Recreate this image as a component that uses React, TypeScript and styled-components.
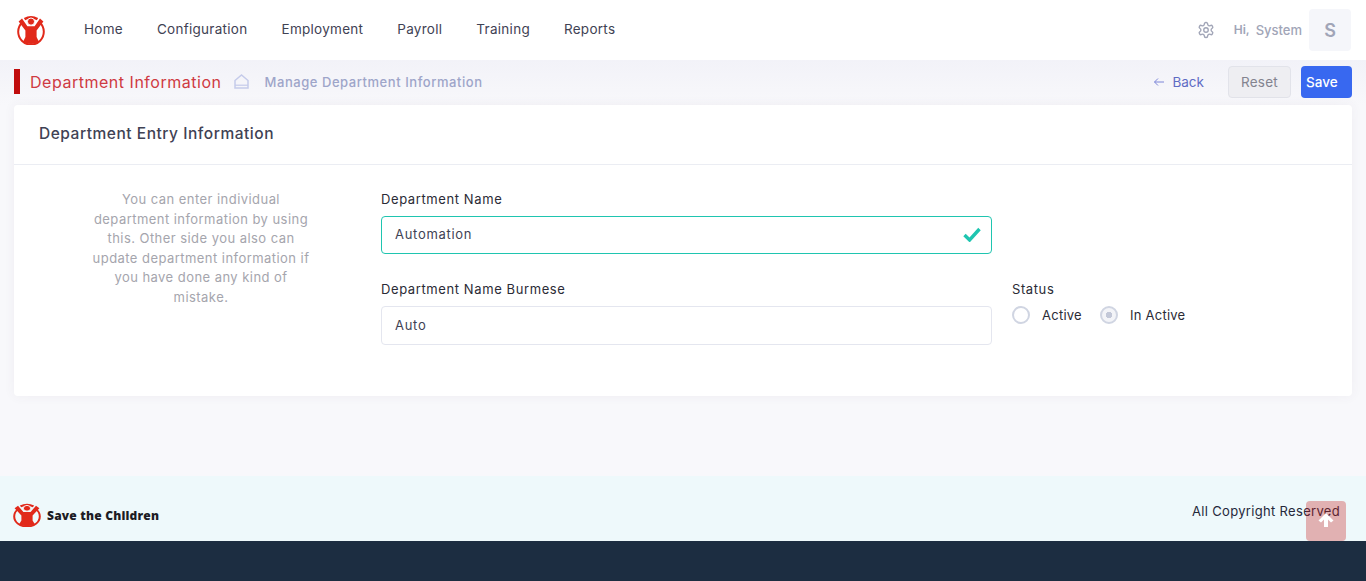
import styled, {createGlobalStyle} from 'styled-components'

const GlobalStyle = createGlobalStyle`
  html, body {
    margin: 0;
    padding: 0;
    height: 100%;
    overflow: hidden;
    background: #f8f8fb;
    font-family: Inter, 'Noto Sans', sans-serif;
  }
  * { box-sizing: border-box; }
`

const NAV_ITEMS = ['Home', 'Configuration', 'Employment', 'Payroll', 'Training', 'Reports']

const Logo = ({width, height}: {width: number; height: number}) => (
  <svg width={width} height={height} viewBox="0 0 30 30" fill="none" preserveAspectRatio="none">
    <path d="M6.2 7.5 A12.8 12.8 0 1 0 23.8 7.5" stroke="#e1291a" strokeWidth="2" />
    <path d="M8.5 4.2 A12.8 12.8 0 0 1 21.5 4.2" stroke="#e1291a" strokeWidth="2.6" />
    <circle cx="15" cy="6.6" r="3.6" fill="#e1291a" stroke="#fff" strokeWidth="1" />
    <path
      d="M2.6 6.6 L6 3.4 L11.4 11.2 L18.6 11.2 L24 3.4 L27.4 6.6 L20.6 15.5 L20.6 22 L23 27 Q15 31 7 27 L9.4 22 L9.4 15.5 Z"
      fill="#e1291a"
    />
  </svg>
)

const App = () => {
  return (
    <>
      <GlobalStyle />
      <Page>
        <TopBar>
          <LogoSlot>
            <Logo width={30} height={30} />
          </LogoSlot>
          <Nav>
            {NAV_ITEMS.map(item => (
              <NavLink key={item}>{item}</NavLink>
            ))}
          </Nav>
          <UserArea>
            <svg width="18" height="18" viewBox="0 0 24 24" fill="none" stroke="#a1a5b7" strokeWidth="1.8" strokeLinecap="round" strokeLinejoin="round">
              <path d="M12.22 2h-.44a2 2 0 0 0-2 2v.18a2 2 0 0 1-1 1.73l-.43.25a2 2 0 0 1-2 0l-.15-.08a2 2 0 0 0-2.73.73l-.22.38a2 2 0 0 0 .73 2.73l.15.1a2 2 0 0 1 1 1.72v.51a2 2 0 0 1-1 1.74l-.15.09a2 2 0 0 0-.73 2.73l.22.38a2 2 0 0 0 2.73.73l.15-.08a2 2 0 0 1 2 0l.43.25a2 2 0 0 1 1 1.73V20a2 2 0 0 0 2 2h.44a2 2 0 0 0 2-2v-.18a2 2 0 0 1 1-1.73l.43-.25a2 2 0 0 1 2 0l.15.08a2 2 0 0 0 2.73-.73l.22-.39a2 2 0 0 0-.73-2.73l-.15-.08a2 2 0 0 1-1-1.74v-.5a2 2 0 0 1 1-1.74l.15-.09a2 2 0 0 0 .73-2.73l-.22-.38a2 2 0 0 0-2.73-.73l-.15.08a2 2 0 0 1-2 0l-.43-.25a2 2 0 0 1-1-1.73V4a2 2 0 0 0-2-2z" />
              <circle cx="12" cy="12" r="3" />
            </svg>
            <Greeting>
              <span>Hi,</span>
              <strong>System</strong>
            </Greeting>
            <Avatar>S</Avatar>
          </UserArea>
        </TopBar>

        <SubHeader>
          <PageMark />
          <PageTitle>Department Information</PageTitle>
          <svg width="15" height="15" viewBox="0 0 15 15" fill="none" stroke="#c5cbea" strokeWidth="1.5">
            <path d="M1 6.5 L7.5 1 L14 6.5 V14 H1 Z" />
            <path d="M1 11.2 H14" strokeWidth="1.2" />
          </svg>
          <Crumb>Manage Department Information</Crumb>
          <Actions>
            <BackLink>
              <svg width="12" height="12" viewBox="0 0 12 12" fill="none" stroke="#7c86d8" strokeWidth="1">
                <path d="M11 6 H1.5 M5 2.5 L1.5 6 L5 9.5" />
              </svg>
              Back
            </BackLink>
            <ResetButton>Reset</ResetButton>
            <SaveButton>Save</SaveButton>
          </Actions>
        </SubHeader>

        <Card>
          <CardHead>Department Entry Information</CardHead>
          <CardBody>
            <HelpText>
              You can enter individual department information by using this. Other side you also can update department
              information if you have done any kind of mistake.
            </HelpText>
            <FormGrid>
              <Field>
                <FieldLabel>Department Name</FieldLabel>
                <InputWrap>
                  <TextInput $valid readOnly value="Automation" />
                  <CheckMark width="18" height="15" viewBox="0 0 18 15" fill="none" stroke="#1fc5b0" strokeWidth="3.4">
                    <path d="M1.5 8 L6.6 13 L16.5 2" />
                  </CheckMark>
                </InputWrap>
              </Field>
              <div />
              <Field>
                <FieldLabel>Department Name Burmese</FieldLabel>
                <TextInput readOnly value="Auto" />
              </Field>
              <Field>
                <FieldLabel>Status</FieldLabel>
                <RadioRow>
                  <RadioOption>
                    <RadioDot />
                    Active
                  </RadioOption>
                  <RadioOption>
                    <RadioDot $checked />
                    In Active
                  </RadioOption>
                </RadioRow>
              </Field>
            </FormGrid>
          </CardBody>
        </Card>

        <Spacer />

        <Footer>
          <FooterBrand>
            <Logo width={30} height={24} />
            <BrandName>Save the Children</BrandName>
          </FooterBrand>
          <Copyright>All Copyright Reserved</Copyright>
        </Footer>
        <BottomBand />
        <ScrollTop>
          <svg width="16" height="16" viewBox="0 0 16 16" fill="#fff">
            <path d="M8 1 L15.5 8.5 L13 10.5 L10 7.5 V15 H6 V7.5 L3 10.5 L0.5 8.5 Z" />
          </svg>
        </ScrollTop>
      </Page>
    </>
  )
}

export default App

const Page = styled.div`
  position: relative;
  height: 581px;
  display: flex;
  flex-direction: column;
  overflow: hidden;
`

const TopBar = styled.header`
  height: 60px;
  flex: none;
  background: #fff;
  display: flex;
  align-items: center;
  padding: 0 15px 0 16px;
`

const LogoSlot = styled.div`
  width: 68px;
  display: flex;
`

const Nav = styled.nav`
  display: flex;
  gap: 34px;
  padding-bottom: 2px;
`

const NavLink = styled.a`
  font-size: 13.5px;
  letter-spacing: 0.28px;
  color: #3f4254;
`

const UserArea = styled.div`
  margin-left: auto;
  display: flex;
  align-items: center;
`

const Greeting = styled.div`
  display: flex;
  gap: 6px;
  margin: 0 7px 0 19px;
  font-size: 13px;
  color: #a1a5b7;
  span { font-weight: 600; font-size: 12px; }
  strong { font-weight: 500; }
`

const Avatar = styled.div`
  width: 42px;
  height: 42px;
  border-radius: 4px;
  background: #f5f6fa;
  color: #a1a5b7;
  font-size: 18px;
  font-weight: 600;
  display: flex;
  align-items: center;
  justify-content: center;
`

const SubHeader = styled.div`
  height: 45px;
  flex: none;
  display: flex;
  align-items: center;
  padding: 0 14px 2px;
  background: linear-gradient(#f2f2f8, #f8f8fb);
`

const PageMark = styled.div`
  width: 6px;
  height: 25px;
  background: #c00d0d;
  margin-right: 10px;
`

const PageTitle = styled.h1`
  margin: 0 12px 0 0;
  font-size: 16px;
  font-weight: 400;
  letter-spacing: 0.52px;
  color: #cf3a42;
`

const Crumb = styled.span`
  margin-left: 16px;
  font-size: 13px;
  font-weight: 500;
  letter-spacing: 0.55px;
  color: #9ea5c9;
`

const Actions = styled.div`
  margin-left: auto;
  display: flex;
  align-items: center;
`

const BackLink = styled.a`
  display: flex;
  align-items: center;
  gap: 7px;
  font-size: 13.5px;
  color: #5f6bc4;
  margin-right: 24px;
`

const ResetButton = styled.button`
  width: 63px;
  height: 32px;
  border: 1px solid #e2e3ea;
  border-radius: 4px;
  background: #eeeef2;
  color: #83838f;
  font: 400 13.5px Inter, sans-serif;
  letter-spacing: 0.2px;
  margin-right: 10px;
`

const SaveButton = styled.button`
  width: 51px;
  height: 32px;
  padding: 0 0 0 5px;
  border: 0;
  border-radius: 4px;
  background: #3868f0;
  color: #fff;
  text-align: left;
  font: 500 13.5px Inter, sans-serif;
`

const Card = styled.section`
  flex: none;
  height: 291px;
  margin: 0 14px;
  background: #fff;
  border-radius: 4px;
  box-shadow: 0 0 12px rgba(82, 63, 105, 0.06);
`

const CardHead = styled.div`
  height: 60px;
  padding: 0 25px 2px;
  display: flex;
  align-items: center;
  border-bottom: 1px solid #ebedf3;
  font-size: 15.5px;
  font-weight: 500;
  letter-spacing: 0.53px;
  color: #3f4254;
`

const CardBody = styled.div`
  display: flex;
  padding-top: 25px;
`

const HelpText = styled.p`
  width: 224px;
  margin: 0 0 0 75px;
  text-align: center;
  font-size: 13px;
  line-height: 19.6px;
  letter-spacing: 0.45px;
  color: #a5a5ad;
`

const FormGrid = styled.div`
  margin-left: 68px;
  display: grid;
  grid-template-columns: 611px 240px;
  column-gap: 20px;
  row-gap: 26px;
`

const Field = styled.div`
  display: flex;
  flex-direction: column;
  gap: 8px;
`

const FieldLabel = styled.label`
  font-size: 13px;
  line-height: 18px;
  letter-spacing: 0.6px;
  color: #2b2b36;
`

const InputWrap = styled.div`
  position: relative;
`

const TextInput = styled.input<{$valid?: boolean}>`
  width: 100%;
  height: ${p => (p.$valid ? '38px' : '39px')};
  padding: 0 13px 2px;
  border: 1px solid ${p => (p.$valid ? '#1fc5b0' : '#e4e6ef')};
  border-radius: 4px;
  outline: none;
  font: 13px Inter, sans-serif;
  letter-spacing: 0.7px;
  color: #3f4254;
`

const CheckMark = styled.svg`
  position: absolute;
  right: 11px;
  top: 11px;
`

const RadioRow = styled.div`
  display: flex;
  gap: 18px;
`

const RadioOption = styled.label`
  display: flex;
  align-items: center;
  gap: 12px;
  font-size: 13px;
  letter-spacing: 0.25px;
  color: #2b2b36;
`

const RadioDot = styled.span<{$checked?: boolean}>`
  width: 18px;
  height: 18px;
  border-radius: 50%;
  border: 2px solid #d0d5e2;
  background: ${p => (p.$checked ? 'radial-gradient(circle, #c3c8d8 0 3px, #f3f4f8 3.5px)' : '#fff')};
`

const Spacer = styled.div`
  flex: 1;
`

const Footer = styled.footer`
  height: 65px;
  flex: none;
  background: #eef9fb;
  display: flex;
  justify-content: space-between;
  padding: 0 26px 0 12px;
`

const FooterBrand = styled.div`
  display: flex;
  align-items: center;
  gap: 5px;
  padding-top: 13px;
`

const BrandName = styled.span`
  font-family: 'Open Sans', sans-serif;
  font-size: 12px;
  font-weight: 800;
  letter-spacing: 0.2px;
  color: #1c1c24;
`

const Copyright = styled.div`
  margin-top: 27px;
  font-size: 13px;
  letter-spacing: 0.32px;
  color: #25283a;
`

const BottomBand = styled.div`
  height: 40px;
  flex: none;
  background: #1c2d41;
`

const ScrollTop = styled.div`
  position: absolute;
  left: 1306px;
  top: 501px;
  width: 40px;
  height: 40px;
  border-radius: 4px;
  background: rgba(200, 30, 30, 0.33);
  display: flex;
  align-items: center;
  justify-content: center;
  padding-bottom: 2px;
`
